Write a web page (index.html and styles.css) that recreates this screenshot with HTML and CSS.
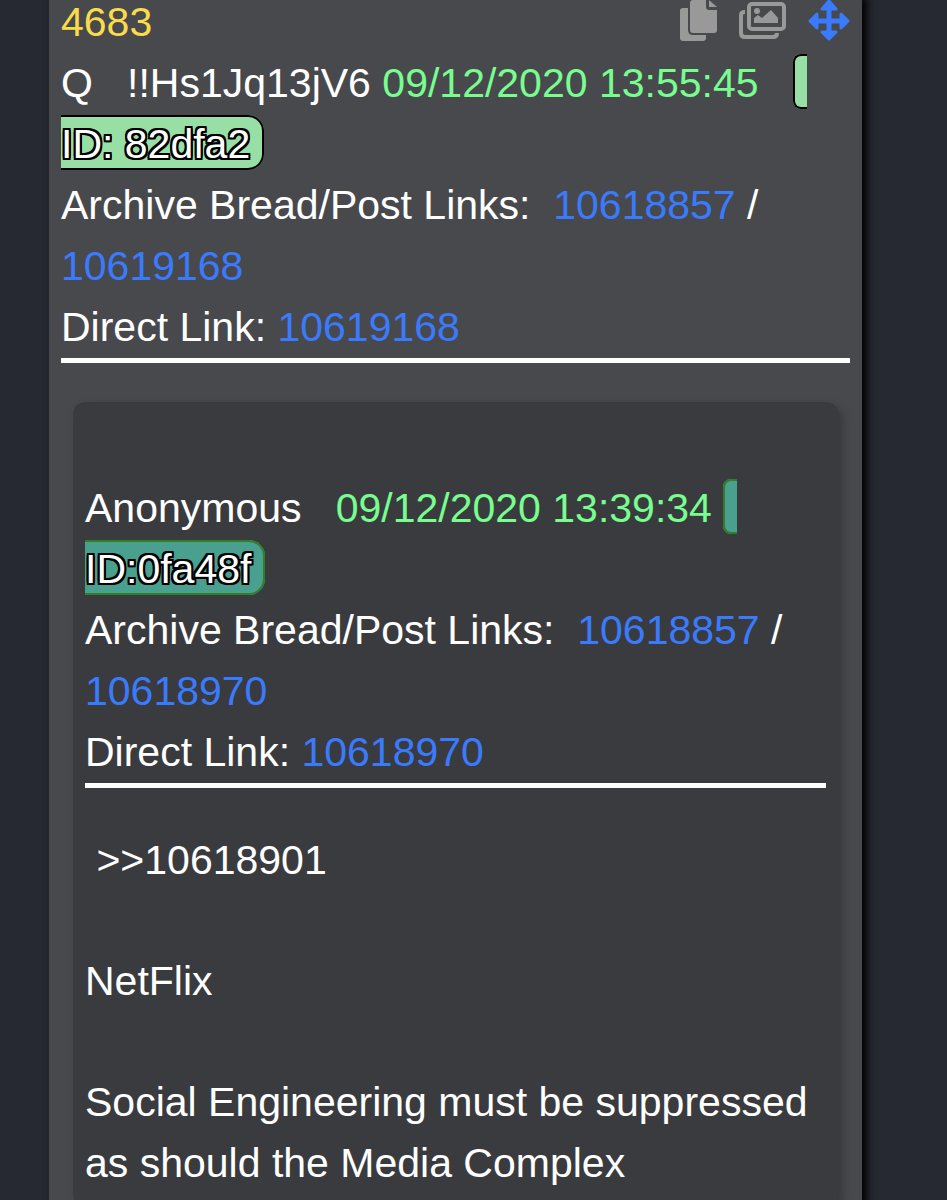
FILE: index.html
```
<!DOCTYPE html>
<html lang="en">
<head>
  <meta charset="UTF-8" />
  <meta name="viewport" content="width=device-width, initial-scale=1" />
  <title>4683</title>
  <link rel="stylesheet" href="styles.css">
</head>
<body>

  <main class="feed">
    <article class="post">
      <header class="post-header">
        <span class="post-number">4683</span>
        <div class="post-tools">
          <button type="button" class="tool" aria-label="Copy post">
            <svg width="37" height="42" viewBox="0 0 37 42" fill="currentColor">
              <path d="M3 8h5v22q0 5 5 5h13v3q0 3-3 3H3q-3 0-3-3V11q0-3 3-3z"/>
              <path d="M13 0h13v7q0 3 3 3h8v20q0 3-3 3H13q-3 0-3-3V3q0-3 3-3z"/>
              <path d="M29 0l8 7h-8z"/>
            </svg>
          </button>
          <button type="button" class="tool" aria-label="Save as image">
            <svg width="47" height="42" viewBox="0 0 47 42" fill="none" stroke="currentColor" stroke-width="4" stroke-linejoin="round">
              <path d="M6 12q-4 0-4 3v18q0 4 4 4h28q4 0 4-4"/>
              <rect x="10" y="4" width="35" height="25" rx="3"/>
              <circle cx="18" cy="11" r="3" fill="currentColor" stroke="none"/>
              <path d="M15 23v-5l4-3 4 3 9-8 7 8v5z" fill="currentColor" stroke="none"/>
            </svg>
          </button>
          <button type="button" class="tool tool-move" aria-label="Move post">
            <svg width="42" height="42" viewBox="0 0 42 42" fill="currentColor" stroke="currentColor" stroke-width="3" stroke-linejoin="round">
              <path d="M21 1l7 8h-6v11h11v-6l7 7-7 7v-6H22v10h6l-7 7-7-7h6V22H9v6l-7-7 7-7v6h11V9h-6z"/>
            </svg>
          </button>
        </div>
      </header>

      <div class="meta">
        <div>Q&nbsp;&nbsp; !!Hs1Jq13jV6 <time>09/12/2020 13:55:45</time>&nbsp;&nbsp;&nbsp;<span class="id id-light"> ID:&nbsp;82dfa2</span></div>
        <div>Archive Bread/Post Links:&nbsp; <a href="#10618857">10618857</a> / <a href="#10619168">10619168</a></div>
        <div>Direct Link: <a href="#10619168">10619168</a></div>
      </div>

      <section class="quote">
        <div class="meta">
          <div>Anonymous&nbsp;&nbsp; <time>09/12/2020 13:39:34</time>&nbsp;<span class="id id-teal"> ID:0fa48f</span></div>
          <div>Archive Bread/Post Links:&nbsp; <a href="#10618857">10618857</a> / <a href="#10618970">10618970</a></div>
          <div>Direct Link: <a href="#10618970">10618970</a></div>
        </div>
        <div class="text">
          <p>&nbsp;&gt;&gt;10618901</p>
          <p>NetFlix</p>
          <p>Social Engineering must be suppressed as should the Media Complex</p>
        </div>
      </section>
    </article>
  </main>

</body>
</html>
```
FILE: styles.css
```
body {
  margin: 0;
  height: 100vh;
  overflow: hidden;
  background: #262932;
  color: #fff;
  font-family: "Liberation Sans", Arial, sans-serif;
  font-size: 41px;
  line-height: 61px;
}

a {
  color: #3a7bfd;
  text-decoration: none;
}

time {
  color: #78fd8f;
}

.feed {
  margin: -8px 85px 0 49px;
}

.post {
  min-height: 100vh;
  padding: 0 12px 24px;
  background: #48494d;
  box-shadow: 5px 5px 8px #000;
}

.post-header {
  display: flex;
  justify-content: space-between;
}

.post-number {
  color: #fadb4a;
}

.post-tools {
  display: flex;
  align-items: center;
  gap: 22px;
  height: 57px;
}

.tool {
  display: flex;
  padding: 0;
  border: none;
  background: none;
  color: #999;
  cursor: pointer;
}

.tool-move {
  color: #3a7bfd;
}

.meta {
  border-bottom: 5px solid #fff;
}

.id {
  padding: 4px 12px 1px;
  border: 2px solid;
  border-radius: 8px 16px 16px 8px;
  text-shadow:
    2px 0 #000, -2px 0 #000, 0 2px #000, 0 -2px #000,
    1px 1px #000, -1px 1px #000, 1px -1px #000, -1px -1px #000,
    2px 2px #000, -2px 2px #000, 2px -2px #000, -2px -2px #000;
}

.id-light {
  background: #98dfa6;
  border-color: #000;
}

.id-teal {
  background: #4aa08f;
  border-color: #347d27;
}

.quote {
  margin: 39px 12px 0;
  padding: 76px 12px 12px;
  border-radius: 12px;
  background: #3a3b3e;
  box-shadow: 5px 5px 8px #38393b;
}

.text {
  margin-top: 42px;
}

.text p {
  margin: 0 0 60px;
}

.text p:last-child {
  margin-bottom: 0;
}
```
